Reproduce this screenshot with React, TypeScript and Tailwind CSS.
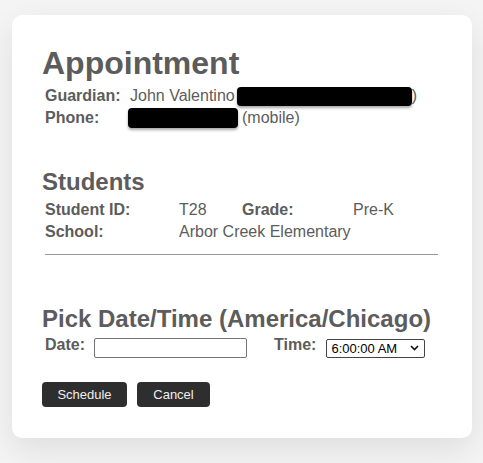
import React from 'react';

const font = { fontFamily: '"Liberation Sans", Arial, sans-serif' };

function Redacted({ className }: { className: string }) {
  return <span className={`inline-block bg-black rounded-[4px] shadow-[0_2px_3px_rgba(0,0,0,0.35)] ${className}`} />;
}

export default function App() {
  const [time, setTime] = React.useState('6:00:00 AM');

  return (
    <div className="min-h-screen bg-[#f4f4f4] pt-[15px] px-[12px] text-[#5c5c5c]" style={font}>
      <div className="w-[460px] bg-white rounded-[10px] shadow-[0_12px_32px_rgba(0,0,0,0.09)] pt-[30px] pb-[31px] px-[30px]">
        {/* Header */}
        <h1 className="text-[32px] leading-[36px] font-bold">Appointment</h1>
        <div className="mt-[4px] pl-[3px] text-[16px] leading-[22px]">
          <div className="flex items-center h-[22px]">
            <span className="w-[85px] font-bold">Guardian:</span>
            <span>John Valentino</span>
            <Redacted className="ml-[2px] w-[175px] h-[19px]" />
            <span>)</span>
          </div>
          <div className="flex items-center h-[22px]">
            <span className="w-[85px] font-bold">Phone:</span>
            <Redacted className="-ml-[2px] w-[110px] h-[20px]" />
            <span className="ml-[4px]">(mobile)</span>
          </div>
        </div>

        {/* Students */}
        <h2 className="mt-[39px] text-[24px] leading-[28px] font-bold">Students</h2>
        <div className="mt-[3px] pl-[3px] grid grid-cols-[134px_63px_111px_1fr] text-[16px] leading-[22px]">
          <span className="font-bold">Student ID:</span>
          <span>T28</span>
          <span className="font-bold">Grade:</span>
          <span>Pre-K</span>
          <span className="font-bold">School:</span>
          <span className="col-span-3">Arbor Creek Elementary</span>
        </div>
        <div className="mt-[11px] ml-[3px] mr-[4px] border-t border-[#999]" />

        {/* Pick date/time */}
        <h2 className="mt-[50px] text-[24px] leading-[28px] font-bold">Pick Date/Time (America/Chicago)</h2>
        <div className="mt-[1px] pl-[3px] flex items-start h-[24px] text-[16px] leading-[22px]">
          <span className="font-bold">Date:</span>
          <input
            type="text"
            className="ml-[9px] mt-[4px] w-[153px] h-[20px] border border-[#767676] rounded-[2px] bg-white"
          />
          <span className="ml-[27px] font-bold">Time:</span>
          <div className="relative flex ml-[10px] mt-[5px] h-[19px]">
            <select
              value={time}
              onChange={e => setTime(e.target.value)}
              className="appearance-none w-[99px] h-[19px] border border-[#444] rounded-[2px] bg-white text-black text-[13px] leading-[17px] pl-[4px]"
            >
              <option>6:00:00 AM</option>
              <option>6:30:00 AM</option>
              <option>7:00:00 AM</option>
            </select>
            <svg
              className="absolute right-[6px] top-[6px] pointer-events-none"
              width="9"
              height="6"
              viewBox="0 0 9 6"
              fill="none"
            >
              <path d="M1 1l3.5 3.5L8 1" stroke="#111" strokeWidth="1.6" />
            </svg>
          </div>
        </div>

        {/* Actions */}
        <div className="mt-[24px] flex gap-[10px] text-[13px]">
          <button className="w-[85px] h-[25px] bg-[#2e2e2e] text-[#eee] rounded-[4px]">Schedule</button>
          <button className="w-[73px] h-[25px] bg-[#2e2e2e] text-[#eee] rounded-[4px]">Cancel</button>
        </div>
      </div>
    </div>
  );
}
